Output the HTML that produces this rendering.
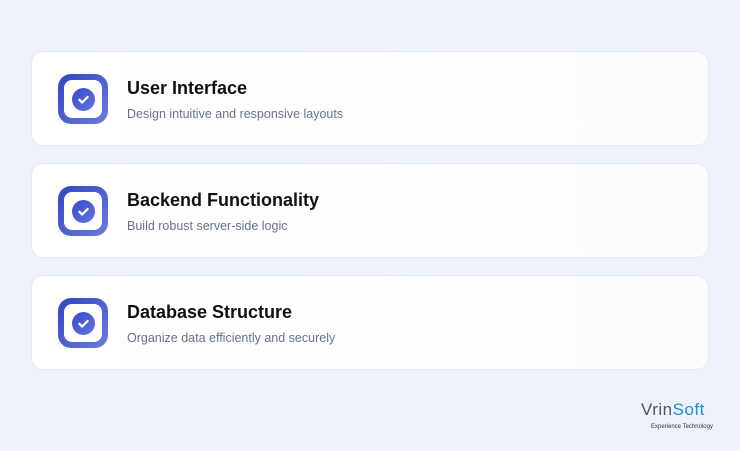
<!DOCTYPE html>
<html><head><style>
body{margin:0;width:740px;height:451px;background:#eef2fb;font-family:"Liberation Sans",sans-serif;position:relative;overflow:hidden}
.card{position:absolute;left:31px;width:678px;height:95px;background:linear-gradient(90deg,#fff,#fbfcfe);border:1px solid #e3e8f3;border-radius:12px;box-sizing:border-box}
.ic{position:absolute;left:26px;top:22px;width:50px;height:50px;border-radius:13px;background:linear-gradient(135deg,#3445bf,#6a7ae0)}
.in{position:absolute;left:6px;top:6px;width:38px;height:38px;border-radius:8px;background:#fff}
.in svg{position:absolute;left:7.5px;top:7.5px}
.t{position:absolute;left:95px;top:26px;font-size:18px;font-weight:bold;color:#111}
.s{position:absolute;left:95px;top:55px;font-size:12.5px;color:#64748b}
</style></head><body>
<div class="card" style="top:51px"><div class="ic"><div class="in"><svg width="23" height="23" viewBox="0 0 25 25"><defs><linearGradient id="g" x1="0" y1="0" x2="1" y2="1"><stop offset="0" stop-color="#3a4bc4"/><stop offset="1" stop-color="#6474dc"/></linearGradient></defs><circle cx="12.5" cy="12.5" r="12.5" fill="url(#g)"/><path d="M8 12.8l3 3 6-6" stroke="#fff" stroke-width="2.4" fill="none" stroke-linecap="round" stroke-linejoin="round"/></svg></div></div><div class="t">User Interface</div><div class="s">Design intuitive and responsive layouts</div></div>
<div class="card" style="top:163px"><div class="ic"><div class="in"><svg width="23" height="23" viewBox="0 0 25 25"><circle cx="12.5" cy="12.5" r="12.5" fill="url(#g)"/><path d="M8 12.8l3 3 6-6" stroke="#fff" stroke-width="2.4" fill="none" stroke-linecap="round" stroke-linejoin="round"/></svg></div></div><div class="t">Backend Functionality</div><div class="s">Build robust server-side logic</div></div>
<div class="card" style="top:275px"><div class="ic"><div class="in"><svg width="23" height="23" viewBox="0 0 25 25"><circle cx="12.5" cy="12.5" r="12.5" fill="url(#g)"/><path d="M8 12.8l3 3 6-6" stroke="#fff" stroke-width="2.4" fill="none" stroke-linecap="round" stroke-linejoin="round"/></svg></div></div><div class="t">Database Structure</div><div class="s">Organize data efficiently and securely</div></div>
<div style="position:absolute;left:641px;top:400px;font-size:17px;color:#555;letter-spacing:0.5px">Vrin<span style="color:#1a8fd8">Soft</span></div>
<div style="position:absolute;left:651px;top:424px;font-size:6px;color:#333">Experience Technology</div>
</body></html>
